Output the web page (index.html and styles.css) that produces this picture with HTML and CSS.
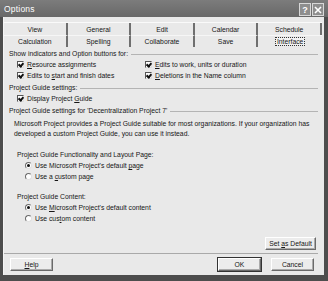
FILE: index.html
```html
<!DOCTYPE html>
<html lang="en">
<head>
    <meta charset="UTF-8">
    <title>Options</title>
    <link rel="stylesheet" href="styles.css">
</head>
<body>
    <div class="window">
        <div class="titlebar">
            <span class="title">Options</span>
            <div class="caption-btns">
                <span class="cap-btn">?</span>
                <span class="cap-btn">
                    <svg width="8" height="8" viewBox="0 0 8 8"><path d="M1 1L7 7M7 1L1 7" stroke="#fff" stroke-width="1.6"/></svg>
                </span>
            </div>
        </div>

        <div class="client">
            <div class="tabs">
                <div class="tab">View</div>
                <div class="tab">General</div>
                <div class="tab">Edit</div>
                <div class="tab">Calendar</div>
                <div class="tab">Schedule</div>
                <div class="tab">Calculation</div>
                <div class="tab">Spelling</div>
                <div class="tab">Collaborate</div>
                <div class="tab">Save</div>
                <div class="tab active"><span class="focus">Interface</span></div>
            </div>

            <div class="page">
                <div class="group-label"><span>Show indicators and Option buttons for:</span></div>
                <div class="check-grid">
                    <div class="option check"><i class="box on"></i><span><u>R</u>esource assignments</span></div>
                    <div class="option check"><i class="box on"></i><span><u>E</u>dits to work, units or duration</span></div>
                    <div class="option check"><i class="box on"></i><span>Edits to <u>s</u>tart and finish dates</span></div>
                    <div class="option check"><i class="box on"></i><span><u>D</u>eletions in the Name column</span></div>
                </div>

                <div class="group-label"><span>Project Guide settings:</span></div>
                <div class="option check"><i class="box on"></i><span>Display Project <u>G</u>uide</span></div>

                <div class="group-label"><span>Project Guide settings for 'Decentralization Project 7'</span></div>
                <p class="intro">Microsoft Project provides a Project Guide suitable for most organizations. If your organization has developed a custom Project Guide, you can use it instead.</p>

                <div class="sub-label first">Project Guide Functionality and Layout Page:</div>
                <div class="option radio"><i class="dot on"></i><span>Use Microsoft Project's default <u>p</u>age</span></div>
                <div class="option radio"><i class="dot"></i><span>Use a <u>c</u>ustom page</span></div>

                <div class="sub-label">Project Guide Content:</div>
                <div class="option radio"><i class="dot on"></i><span>Use <u>M</u>icrosoft Project's default content</span></div>
                <div class="option radio"><i class="dot"></i><span>Use cus<u>t</u>om content</span></div>

                <div class="page-actions">
                    <button class="btn wide">Set <u>a</u>s Default</button>
                </div>
            </div>

            <div class="footer">
                <button class="btn"><u>H</u>elp</button>
                <div class="footer-right">
                    <button class="btn default">OK</button>
                    <button class="btn">Cancel</button>
                </div>
            </div>
        </div>
    </div>
</body>
</html>
```

FILE: styles.css
```css
body {
    margin: 0;
    font-family: "Liberation Sans", Arial, sans-serif;
    font-size: 6.8px;
    color: #161616;
    background-color: #fff;
}

.window {
    width: 328px;
    height: 281px;
    box-sizing: border-box;
    padding: 0 4px 6px 3px;
    background-color: #4d4d4d;
    display: flex;
    flex-direction: column;
}

.titlebar {
    height: 17px;
    margin: 0 -4px 0 -3px;
    padding: 0 4px 0 4px;
    display: flex;
    align-items: center;
    justify-content: space-between;
    background: linear-gradient(to bottom, #7c7c7c, #686868);
}

.title {
    color: #fff;
    font-size: 8.5px;
    letter-spacing: 0.2px;
}

.caption-btns {
    display: flex;
    gap: 1px;
    margin-top: 2px;
}

.cap-btn {
    width: 10px;
    height: 11px;
    display: flex;
    align-items: center;
    justify-content: center;
    background-color: #8e8e8e;
    border: 1px solid #d8d8d8;
    color: #fff;
    font-size: 9px;
    font-weight: bold;
}

.client {
    flex: 1;
    background-color: #e9e9e9;
    border-left: 1px solid #f4f4f4;
    display: flex;
    flex-direction: column;
}

/* tab strip, two rows */
.tabs {
    margin: 5px 2px 0 0;
    display: grid;
    grid-template-columns: repeat(5, 1fr);
    grid-auto-rows: 12px;
    border-top: 1px solid #fafafa;
}

.tab {
    display: flex;
    align-items: center;
    justify-content: center;
    border-right: 2px solid #6f6f6f;
}

.tab:nth-child(10) {
    border-right: none;
}

.tab:nth-child(n+6) {
    border-top: 1px solid #f6f6f6;
}

.focus {
    outline: 1px dotted #333;
    padding: 0 1px;
    background-color: #f2f2f2;
}

/* page body */
.page {
    height: 207px;
    box-sizing: border-box;
    margin-right: 6px;
    padding: 0 0 3px 5px;
    border-bottom: 1px solid #a9a9a9;
    display: flex;
    flex-direction: column;
}

.group-label {
    height: 11px;
    display: flex;
    align-items: center;
    gap: 3px;
    margin-top: 1px;
}

.group-label::after {
    content: "";
    flex: 1;
    border-top: 1px solid #b4b4b4;
    margin-top: 1px;
}

.check-grid {
    display: grid;
    grid-template-columns: 128px 1fr;
}

.option {
    height: 11px;
    display: flex;
    align-items: center;
    gap: 3px;
    padding-left: 8px;
}

.option.radio {
    padding-left: 16px;
}

.box {
    width: 7px;
    height: 7px;
    box-sizing: border-box;
    border: 1px solid #555;
    border-right-color: #ddd;
    border-bottom-color: #ddd;
    background-color: #fff;
    position: relative;
}

.box.on::after {
    content: "";
    position: absolute;
    left: 1px;
    top: 0;
    width: 2px;
    height: 3px;
    border: solid #111;
    border-width: 0 2px 2px 0;
    transform: rotate(40deg);
}

.dot {
    width: 7px;
    height: 7px;
    box-sizing: border-box;
    border-radius: 50%;
    border: 1px solid #6a6a6a;
    border-right-color: #e0e0e0;
    border-bottom-color: #e0e0e0;
    background-color: #fff;
    position: relative;
}

.dot.on::after {
    content: "";
    position: absolute;
    left: 1px;
    top: 1px;
    width: 3px;
    height: 3px;
    border-radius: 50%;
    background-color: #111;
}

.intro {
    margin: 3px 4px 0 5px;
    line-height: 10px;
}

.sub-label {
    height: 11px;
    line-height: 11px;
    padding-left: 8px;
    margin-top: 9px;
}

.sub-label.first {
    margin-top: 10px;
}

.page-actions {
    margin-top: auto;
    display: flex;
    justify-content: flex-end;
    padding-right: 2px;
}

/* buttons */
.btn {
    font-family: "Liberation Sans", Arial, sans-serif;
    font-size: 6.8px;
    color: #161616;
    width: 43px;
    height: 13px;
    padding: 0;
    background-color: #ececec;
    border: 1px solid;
    border-color: #fff #6a6a6a #6a6a6a #fff;
    box-shadow: inset -1px -1px 0 #aaa;
}

.btn.wide {
    width: 51px;
}

.btn.default {
    outline: 1px solid #333;
}

.footer {
    padding: 4px 10px 0 6px;
    display: flex;
    justify-content: space-between;
}

.footer-right {
    display: flex;
    gap: 10px;
}
```
